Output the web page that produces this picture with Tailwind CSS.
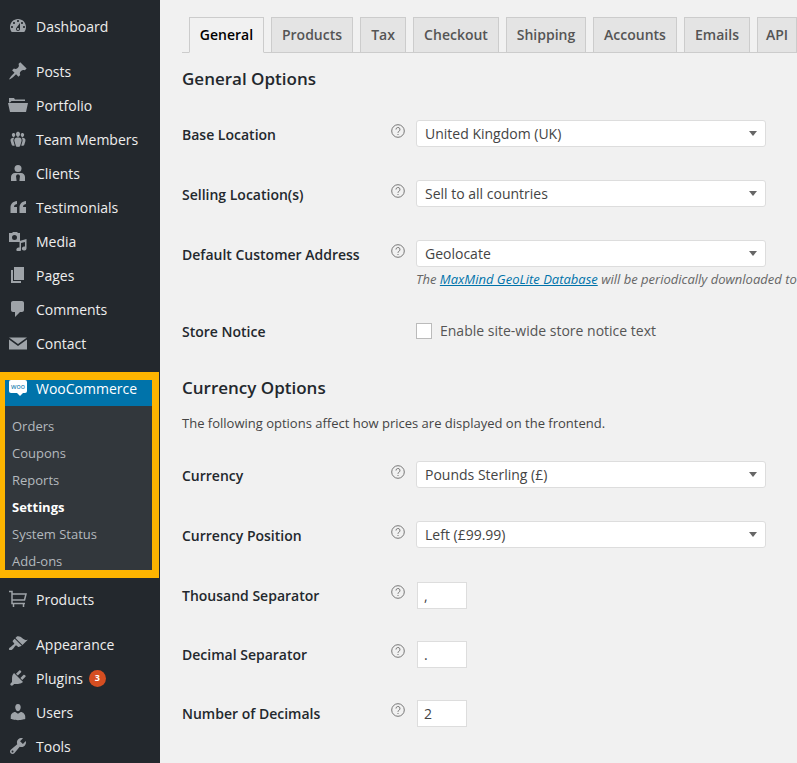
<!DOCTYPE html>
<html lang="en">
<head>
<meta charset="UTF-8">
<title>WooCommerce Settings</title>
<script src="https://cdn.jsdelivr.net/npm/@tailwindcss/browser@4"></script>
</head>
<body class="font-['Open_Sans',sans-serif] bg-[#f1f1f1] text-[#444] w-[797px] h-[763px] overflow-hidden flex">

<!-- sidebar -->
<aside class="w-[160px] h-[763px] shrink-0 bg-[#23282d] text-[#eee] text-[14px] pt-[9px] overflow-hidden">
  <a class="h-[34px] flex items-center"><span class="w-[36px] flex justify-center"><svg class="w-[20px] h-[20px] fill-[#9ea3a8]" viewBox="0 0 20 20"><path d="M3.76 16h12.48c1.1-1.37 1.76-3.11 1.76-5 0-4.42-3.58-8-8-8s-8 3.58-8 8c0 1.89.66 3.63 1.76 5zM10 4c.55 0 1 .45 1 1s-.45 1-1 1-1-.45-1-1 .45-1 1-1zM6 6c.55 0 1 .45 1 1s-.45 1-1 1-1-.45-1-1 .45-1 1-1zm8 0c.55 0 1 .45 1 1s-.45 1-1 1-1-.45-1-1 .45-1 1-1zm-5.37 5.55L12 7v6c0 1.1-.9 2-2 2s-2-.9-2-2c0-.57.24-1.08.63-1.45zM4 10c.55 0 1 .45 1 1s-.45 1-1 1-1-.45-1-1 .45-1 1-1zm12 0c.55 0 1 .45 1 1s-.45 1-1 1-1-.45-1-1 .45-1 1-1zm-5 3c0-.55-.45-1-1-1s-1 .45-1 1 .45 1 1 1 1-.45 1-1z"/></svg></span>Dashboard</a>

  <div class="h-[11px]"></div>

  <a class="h-[34px] flex items-center"><span class="w-[36px] flex justify-center"><svg class="w-[20px] h-[20px] fill-[#9ea3a8]" viewBox="0 0 20 20"><path d="M10.44 3.02l1.82-1.82 6.36 6.35-1.83 1.82c-1.05-.68-2.48-.57-3.41.36l-.75.75c-.92.93-1.04 2.35-.35 3.41l-1.83 1.82-2.41-2.41-2.8 2.79c-.42.42-3.38 2.71-3.8 2.29s1.86-3.39 2.28-3.81l2.79-2.79L4.1 9.36l1.83-1.82c1.05.69 2.48.57 3.41-.36l.75-.75c.93-.92 1.04-2.35.36-3.41z"/></svg></span>Posts</a>
  <a class="h-[34px] flex items-center"><span class="w-[36px] flex justify-center"><svg class="w-[20px] h-[20px] fill-[#9ea3a8]" viewBox="0 0 20 20"><path d="M1 3h5l1 1.500h10V6H3.500L2 7.500H1zM0 8h20l-2 9H2z"/></svg></span>Portfolio</a>
  <a class="h-[34px] flex items-center"><span class="w-[36px] flex justify-center"><svg class="w-[20px] h-[20px] fill-[#9ea3a8]" viewBox="0 0 20 20"><path d="M8.03 4.46c-.29 1.28.55 3.46 1.97 3.46 1.41 0 2.25-2.18 1.96-3.46-.22-.98-1.08-1.63-1.96-1.63-.89 0-1.74.65-1.97 1.63zm-4.13.9c-.25 1.08.47 2.93 1.67 2.93s1.92-1.85 1.67-2.93c-.19-.83-.92-1.39-1.67-1.39s-1.48.56-1.67 1.39zm8.86 0c-.25 1.08.47 2.93 1.66 2.93 1.2 0 1.92-1.85 1.67-2.93-.19-.83-.92-1.39-1.67-1.39-.74 0-1.47.56-1.66 1.39zm-.59 11.43l1.25-4.3C14.2 10 12.71 8.47 10 8.47c-2.72 0-4.21 1.53-3.44 4.02l1.26 4.3C8.05 17.51 9 18 10 18c.98 0 1.94-.49 2.17-1.21zm-6.1-7.63c-.49.67-.96 1.83-.42 3.59l1.12 3.79c-.34.2-.77.31-1.2.31-.85 0-1.65-.41-1.85-1.03l-1.07-3.65c-.65-2.11.61-3.4 2.92-3.4.27 0 .54.02.79.06-.1.1-.2.22-.29.33zm8.35-.39c2.31 0 3.58 1.29 2.92 3.4l-1.07 3.65c-.2.62-1 1.03-1.85 1.03-.43 0-.86-.11-1.2-.31l1.11-3.77c.55-1.78.08-2.94-.42-3.61-.08-.11-.18-.23-.28-.33.25-.04.51-.06.79-.06z"/></svg></span>Team Members</a>
  <a class="h-[34px] flex items-center"><span class="w-[36px] flex justify-center"><svg class="w-[20px] h-[20px] fill-[#9ea3a8]" viewBox="0 0 20 20"><circle cx="10" cy="5.500" r="3.500"/><path d="M3 18v-4c0-2.200 1.600-4 4-4h6c2.400 0 4 1.800 4 4v4h-5.600l.6-5-1-1.600h-2L8 13l.6 5z"/></svg></span>Clients</a>
  <a class="h-[34px] flex items-center"><span class="w-[36px] flex justify-center"><svg class="w-[20px] h-[20px] fill-[#9ea3a8]" viewBox="0 0 20 20"><path d="M9 4v3C6.800 7.400 6 8.600 6 10h3v6H2.500v-5.500C2.500 7 5 4.300 9 4zM18 4v3c-2.200.4-3 1.600-3 3h3v6h-6.500v-5.500C11.500 7 14 4.300 18 4z"/></svg></span>Testimonials</a>
  <a class="h-[34px] flex items-center"><span class="w-[36px] flex justify-center"><svg class="w-[20px] h-[20px] fill-[#9ea3a8]" viewBox="0 0 20 20"><path fill-rule="evenodd" d="M1 2h3l1-1h4l1 1h2v9H1zM6.500 4a2.500 2.500 0 1 0 0 5 2.500 2.500 0 0 0 0-5z"/><path d="M18.500 8v9.500a2.300 2 0 1 1-1.500-1.900V11l-4 1v6.500a2.300 2 0 1 1-1.500-1.900V10z"/></svg></span>Media</a>
  <a class="h-[34px] flex items-center"><span class="w-[36px] flex justify-center"><svg class="w-[20px] h-[20px] fill-[#9ea3a8]" viewBox="0 0 20 20"><path d="M6 15V2h10v13H6zm-1 1h8v2H3V5h2v11z"/></svg></span>Pages</a>
  <a class="h-[34px] flex items-center"><span class="w-[36px] flex justify-center"><svg class="w-[20px] h-[20px] fill-[#9ea3a8]" viewBox="0 0 20 20"><path d="M5 2h9c1.100 0 2 .9 2 2v7c0 1.100-.9 2-2 2h-2l-5 5v-5H5c-1.100 0-2-.9-2-2V4c0-1.100.9-2 2-2z"/></svg></span>Comments</a>
  <a class="h-[34px] flex items-center"><span class="w-[36px] flex justify-center"><svg class="w-[20px] h-[20px] fill-[#9ea3a8]" viewBox="0 0 20 20"><path d="M1 4.500h18L10 11zM1 6.500l9 6.500 9-6.500v10H1z"/></svg></span>Contact</a>

  <!-- highlighted WooCommerce block -->
  <div class="mt-[12px] w-[159px] border-solid border-[#fdb400] border-t-[8px] border-b-[8px] border-l-[5px] border-r-[7px] bg-[#32373c]">
    <a class="h-[26px] flex items-start bg-[#0073aa] text-white">
      <span class="w-[31px] flex pl-[4px]">
        <span class="relative w-[18px] h-[13px] bg-white rounded-[2px] flex items-center justify-center text-[7px] leading-none text-[#0073aa]">woo<span class="absolute left-[8px] top-[13px] w-0 h-0 border-l-[3px] border-r-[3px] border-t-[3px] border-l-transparent border-r-transparent border-t-white"></span></span>
      </span>
      <span class="leading-[17px]">WooCommerce</span>
    </a>
    <ul class="text-[13px] text-[#b4b9be] pt-[7px] h-[164px] overflow-hidden">
      <li class="h-[27px] pl-[7px] leading-[27px]">Orders</li>
      <li class="h-[27px] pl-[7px] leading-[27px]">Coupons</li>
      <li class="h-[27px] pl-[7px] leading-[27px]">Reports</li>
      <li class="h-[27px] pl-[7px] leading-[27px] text-white font-bold">Settings</li>
      <li class="h-[27px] pl-[7px] leading-[27px]">System Status</li>
      <li class="h-[27px] pl-[7px] leading-[27px]">Add-ons</li>
    </ul>
  </div>

  <a class="h-[34px] mt-[4px] flex items-center"><span class="w-[36px] flex justify-center"><svg class="w-[20px] h-[20px] fill-none stroke-[#9ea3a8] stroke-[1.5]" viewBox="0 0 20 20"><path d="M1 2.500h3v12h13M4 5h14l-1.500 6H4"/><path d="M5.500 15v3M15.500 15v3"/></svg></span>Products</a>

  <div class="h-[11px]"></div>

  <a class="h-[34px] flex items-center"><span class="w-[36px] flex justify-center"><svg class="w-[20px] h-[20px] fill-[#9ea3a8]" viewBox="0 0 20 20"><path d="M14.480 11.060L7.410 3.990l1.500-1.500c.5-.56 2.300-.47 3.510.32 1.210.8 1.430 1.280 2.910 2.100 1.180.64 2.450 1.260 4.450.85zm-.71.71L6.700 4.700 4.930 6.470c-.39.39-.39 1.020 0 1.410l1.060 1.060c.39.39.39 1.030 0 1.420-.6.6-1.430 1.110-2.210 1.690-.35.26-.7.53-1.010.84C1.430 13.230.4 14.960 1.100 15.660c.7.7 2.430.6 3.770-.73.31-.31.58-.66.84-1.010.58-.78 1.090-1.610 1.690-2.210.39-.39 1.030-.39 1.420 0l1.060 1.060c.39.39 1.020.39 1.410 0z"/></svg></span>Appearance</a>
  <a class="h-[34px] flex items-center"><span class="w-[36px] flex justify-center"><svg class="w-[20px] h-[20px] fill-[#9ea3a8]" viewBox="0 0 20 20"><path d="M13.110 4.360L9.870 7.600 8 5.730l3.240-3.240c.35-.34 1.050-.2 1.560.32.52.51.66 1.210.31 1.550zm-8 1.770l.91-1.120 9.010 9.010-1.190.84c-.71.71-2.630 1.160-3.820 1.160H6.140L4.900 17.260c-.59.59-1.540.59-2.120 0-.59-.58-.59-1.530 0-2.120l1.240-1.240v-3.880c0-1.130.4-3.190 1.090-3.890zm7.260 3.970l3.240-3.240c.34-.35 1.040-.21 1.550.31.52.51.66 1.210.31 1.550l-3.240 3.250z"/></svg></span>Plugins<span class="ml-[6px] w-[17px] h-[17px] rounded-full bg-[#d54e21] text-white text-[9px] font-bold flex items-center justify-center">3</span></a>
  <a class="h-[34px] flex items-center"><span class="w-[36px] flex justify-center"><svg class="w-[20px] h-[20px] fill-[#9ea3a8]" viewBox="0 0 20 20"><path d="M10 9.250c-2.270 0-2.730-3.440-2.730-3.440C7 4.020 7.820 2 9.970 2c2.160 0 2.980 2.020 2.710 3.810 0 0-.41 3.440-2.680 3.440zm0 2.570L12.720 10c2.390 0 4.520 2.330 4.520 4.530v2.490s-3.650 1.130-7.240 1.130c-3.650 0-7.240-1.130-7.240-1.130v-2.490c0-2.250 1.940-4.480 4.470-4.480z"/></svg></span>Users</a>
  <a class="h-[34px] flex items-center"><span class="w-[36px] flex justify-center"><svg class="w-[20px] h-[20px] fill-[#9ea3a8]" viewBox="0 0 20 20"><path d="M16.680 9.770c-1.340 1.340-3.300 1.670-4.950.99l-5.410 6.520c-.99.99-2.590.99-3.580 0s-.99-2.590 0-3.570l6.520-5.420c-.68-1.650-.35-3.610.99-4.950 1.280-1.280 3.120-1.620 4.720-1.060l-2.890 2.890 2.820 2.820 2.860-2.870c.53 1.580.18 3.390-1.080 4.670zM3.810 16.210c.4.39 1.040.39 1.430 0 .4-.4.4-1.040 0-1.430-.39-.4-1.030-.4-1.430 0-.39.39-.39 1.030 0 1.430z"/></svg></span>Tools</a>
</aside>

<!-- content -->
<main class="flex-1 min-w-0 pl-[22px] overflow-hidden">
  <nav class="mt-[17px] h-[36px] border-b border-[#ccc] pl-[7px] flex gap-[7px] text-[14px] font-semibold text-[#555] w-[615px]">
    <a class="h-[36px] w-[75px] pb-[2px] flex items-center justify-center border border-[#ccc] border-b-[#f1f1f1] bg-[#f1f1f1] text-[#000]">General</a>
    <a class="h-[35px] w-[82px] pb-[2px] flex items-center justify-center border border-[#ccc] border-b-0 bg-[#e4e4e4]">Products</a>
    <a class="h-[35px] w-[46px] pb-[2px] flex items-center justify-center border border-[#ccc] border-b-0 bg-[#e4e4e4]">Tax</a>
    <a class="h-[35px] w-[86px] pb-[2px] flex items-center justify-center border border-[#ccc] border-b-0 bg-[#e4e4e4]">Checkout</a>
    <a class="h-[35px] w-[80px] pb-[2px] flex items-center justify-center border border-[#ccc] border-b-0 bg-[#e4e4e4]">Shipping</a>
    <a class="h-[35px] w-[84px] pb-[2px] flex items-center justify-center border border-[#ccc] border-b-0 bg-[#e4e4e4]">Accounts</a>
    <a class="h-[35px] w-[66px] pb-[2px] flex items-center justify-center border border-[#ccc] border-b-0 bg-[#e4e4e4]">Emails</a>
    <a class="h-[35px] w-[40px] pb-[2px] shrink-0 flex items-center justify-center border border-[#ccc] border-b-0 bg-[#e4e4e4]">API</a>
  </nav>

  <h2 class="mt-[14px] text-[17px] leading-[24px] font-semibold text-[#23282d]">General Options</h2>

  <section class="mt-[29px] text-[14px]">
    <div class="flex h-[27px] mb-[33px]">
      <label class="w-[209px] font-semibold text-[#23282d] leading-[30px]">Base Location</label>
      <span class="w-[25px] pt-[4px]"><svg class="w-[14px] h-[14px] fill-none stroke-[#777]" viewBox="0 0 14 14"><circle cx="7" cy="7" r="6.300"/><path d="M5 5.500a2 2 0 1 1 2.800 1.800C7.200 7.600 7 8 7 8.800M7 10v1"/></svg></span>
      <div class="w-[350px] h-[27px] bg-white border border-[#ddd] rounded-[3px] pl-[8px] flex items-center justify-between pr-[8px] text-[#444]">United Kingdom (UK)<i class="w-0 h-0 border-l-[4px] border-r-[4px] border-t-[5px] border-l-transparent border-r-transparent border-t-[#666]"></i></div>
    </div>
    <div class="flex h-[27px] mb-[33px]">
      <label class="w-[209px] font-semibold text-[#23282d] leading-[30px]">Selling Location(s)</label>
      <span class="w-[25px] pt-[4px]"><svg class="w-[14px] h-[14px] fill-none stroke-[#777]" viewBox="0 0 14 14"><circle cx="7" cy="7" r="6.300"/><path d="M5 5.500a2 2 0 1 1 2.800 1.800C7.200 7.600 7 8 7 8.800M7 10v1"/></svg></span>
      <div class="w-[350px] h-[27px] bg-white border border-[#ddd] rounded-[3px] pl-[8px] flex items-center justify-between pr-[8px] text-[#444]">Sell to all countries<i class="w-0 h-0 border-l-[4px] border-r-[4px] border-t-[5px] border-l-transparent border-r-transparent border-t-[#666]"></i></div>
    </div>
    <div class="flex h-[27px]">
      <label class="w-[209px] font-semibold text-[#23282d] leading-[30px]">Default Customer Address</label>
      <span class="w-[25px] pt-[4px]"><svg class="w-[14px] h-[14px] fill-none stroke-[#777]" viewBox="0 0 14 14"><circle cx="7" cy="7" r="6.300"/><path d="M5 5.500a2 2 0 1 1 2.800 1.800C7.200 7.600 7 8 7 8.800M7 10v1"/></svg></span>
      <div class="w-[350px] h-[27px] bg-white border border-[#ddd] rounded-[3px] pl-[8px] flex items-center justify-between pr-[8px] text-[#444]">Geolocate<i class="w-0 h-0 border-l-[4px] border-r-[4px] border-t-[5px] border-l-transparent border-r-transparent border-t-[#666]"></i></div>
    </div>
    <p class="ml-[234px] mt-[3px] h-[18px] leading-[18px] text-[13px] italic text-[#666] whitespace-nowrap">The <a class="text-[#0073aa] underline">MaxMind GeoLite Database</a> will be periodically downloaded to</p>
    <div class="flex h-[17px] mt-[34px] items-center">
      <label class="w-[234px] pt-[2px] font-semibold text-[#23282d]">Store Notice</label>
      <span class="w-[16px] h-[16px] bg-white border border-[#bbb] mr-[8px]"></span>
      <span class="text-[#555]">Enable site-wide store notice text</span>
    </div>
  </section>

  <h2 class="mt-[37px] text-[17px] leading-[24px] font-semibold text-[#23282d]">Currency Options</h2>
  <p class="mt-[14px] text-[13px] leading-[18px] text-[#444]">The following options affect how prices are displayed on the frontend.</p>

  <section class="mt-[29px] text-[14px]">
    <div class="flex h-[27px] mb-[33px]">
      <label class="w-[209px] font-semibold text-[#23282d] leading-[30px]">Currency</label>
      <span class="w-[25px] pt-[4px]"><svg class="w-[14px] h-[14px] fill-none stroke-[#777]" viewBox="0 0 14 14"><circle cx="7" cy="7" r="6.300"/><path d="M5 5.500a2 2 0 1 1 2.800 1.800C7.200 7.600 7 8 7 8.800M7 10v1"/></svg></span>
      <div class="w-[350px] h-[27px] bg-white border border-[#ddd] rounded-[3px] pl-[8px] flex items-center justify-between pr-[8px] text-[#444]">Pounds Sterling (£)<i class="w-0 h-0 border-l-[4px] border-r-[4px] border-t-[5px] border-l-transparent border-r-transparent border-t-[#666]"></i></div>
    </div>
    <div class="flex h-[27px] mb-[34px]">
      <label class="w-[209px] font-semibold text-[#23282d] leading-[30px]">Currency Position</label>
      <span class="w-[25px] pt-[4px]"><svg class="w-[14px] h-[14px] fill-none stroke-[#777]" viewBox="0 0 14 14"><circle cx="7" cy="7" r="6.300"/><path d="M5 5.500a2 2 0 1 1 2.800 1.800C7.200 7.600 7 8 7 8.800M7 10v1"/></svg></span>
      <div class="w-[350px] h-[27px] bg-white border border-[#ddd] rounded-[3px] pl-[8px] flex items-center justify-between pr-[8px] text-[#444]">Left (£99.99)<i class="w-0 h-0 border-l-[4px] border-r-[4px] border-t-[5px] border-l-transparent border-r-transparent border-t-[#666]"></i></div>
    </div>
    <div class="flex h-[27px] mb-[32px]">
      <label class="w-[209px] font-semibold text-[#23282d] leading-[28px]">Thousand Separator</label>
      <span class="w-[26px] pt-[3px]"><svg class="w-[14px] h-[14px] fill-none stroke-[#777]" viewBox="0 0 14 14"><circle cx="7" cy="7" r="6.300"/><path d="M5 5.500a2 2 0 1 1 2.800 1.800C7.200 7.600 7 8 7 8.800M7 10v1"/></svg></span>
      <div class="w-[50px] h-[27px] bg-white border border-[#ddd] pl-[6px] flex items-center text-[#444]">,</div>
    </div>
    <div class="flex h-[27px] mb-[32px]">
      <label class="w-[209px] font-semibold text-[#23282d] leading-[28px]">Decimal Separator</label>
      <span class="w-[26px] pt-[3px]"><svg class="w-[14px] h-[14px] fill-none stroke-[#777]" viewBox="0 0 14 14"><circle cx="7" cy="7" r="6.300"/><path d="M5 5.500a2 2 0 1 1 2.800 1.800C7.200 7.600 7 8 7 8.800M7 10v1"/></svg></span>
      <div class="w-[50px] h-[27px] bg-white border border-[#ddd] pl-[6px] flex items-center text-[#444]">.</div>
    </div>
    <div class="flex h-[27px]">
      <label class="w-[209px] font-semibold text-[#23282d] leading-[28px]">Number of Decimals</label>
      <span class="w-[26px] pt-[3px]"><svg class="w-[14px] h-[14px] fill-none stroke-[#777]" viewBox="0 0 14 14"><circle cx="7" cy="7" r="6.300"/><path d="M5 5.500a2 2 0 1 1 2.800 1.800C7.200 7.600 7 8 7 8.800M7 10v1"/></svg></span>
      <div class="w-[50px] h-[27px] bg-white border border-[#ddd] pl-[6px] flex items-center text-[#444]">2</div>
    </div>
  </section>
</main>
</body>
</html>
